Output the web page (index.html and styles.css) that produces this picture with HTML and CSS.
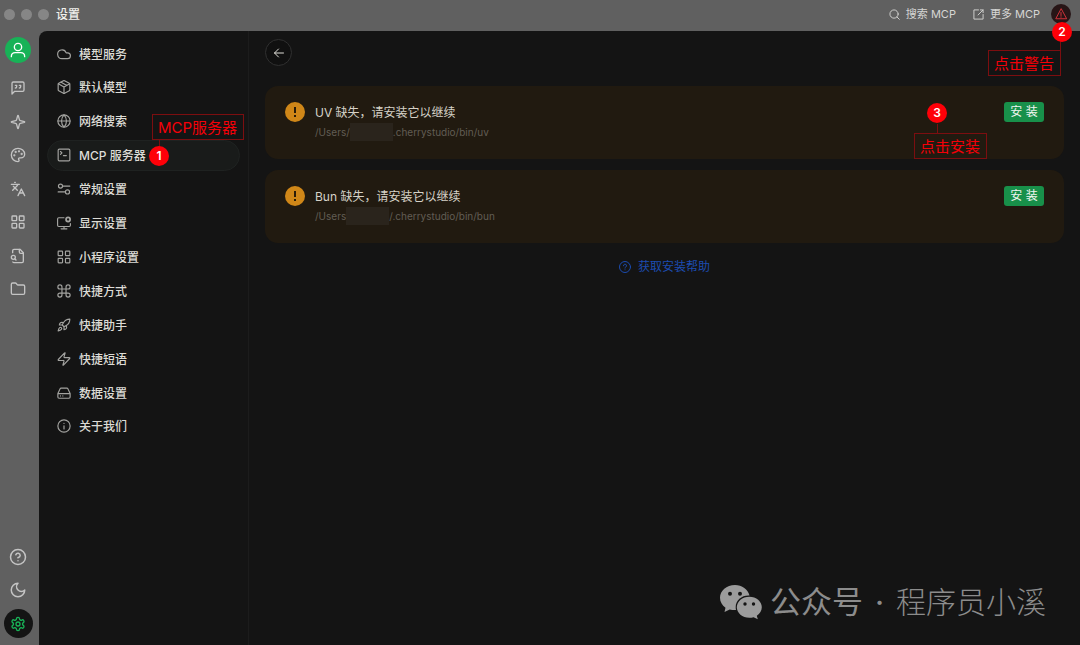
FILE: index.html
```html
<!DOCTYPE html>
<html lang="zh-CN">
<head>
<meta charset="utf-8">
<meta name="viewport" content="width=device-width, initial-scale=1">
<title>设置</title>
<link rel="stylesheet" href="styles.css">
</head>
<body>
<div class="app">
  <header class="titlebar">
    <div class="lights"><span class="light"></span><span class="light"></span><span class="light"></span></div>
    <h1 class="title">设置</h1>
    <div class="actions">
      <button class="action" type="button"><svg class="icon icon-xs" viewBox="0 0 24 24"><circle cx="11" cy="11" r="9"/><path d="m22.500 22.500-5-5"/></svg>搜索 MCP</button>
      <button class="action" type="button"><svg class="icon icon-xs" viewBox="0 0 24 24"><path d="M12 2H2v20h20V12"/><path d="M16 2h6v6"/><path d="M22 2 11 13"/></svg>更多 MCP</button>
      <div class="warning">
        <button class="warning-button" type="button" aria-label="警告"><svg class="icon icon-sm" viewBox="0 0 24 24"><path d="M12 2 1.500 21.500h21z"/><path d="M12 9v6M12 17.500v1"/></svg></button>
        <span class="step step-two">2</span>
        <span class="callout callout-two">点击警告</span>
      </div>
    </div>
  </header>

  <div class="body">
    <aside class="rail">
      <button class="avatar" type="button" aria-label="用户"><svg class="icon icon-lg" viewBox="0 0 24 24"><circle cx="12" cy="7.500" r="5.500"/><path d="M2 22c0-4 3-6 6-6h8c3 0 6 2 6 6"/></svg></button>
      <nav class="rail-main" aria-label="主导航">
        <button class="rail-button" type="button" aria-label="对话"><svg class="icon icon-lg" viewBox="0 0 24 24"><path d="M21 15a2 2 0 0 1-2 2H7l-4 4V5a2 2 0 0 1 2-2h14a2 2 0 0 1 2 2z"/><path d="M8 12a2 2 0 0 0 2-2V8H8M14 12a2 2 0 0 0 2-2V8h-2"/></svg></button>
        <button class="rail-button" type="button" aria-label="助手"><svg class="icon icon-lg" viewBox="0 0 24 24"><path d="M9.937 15.500A2 2 0 0 0 8.500 14.063l-6.135-1.582a.5.5 0 0 1 0-.962L8.500 9.936A2 2 0 0 0 9.937 8.500l1.582-6.135a.5.5 0 0 1 .963 0L14.063 8.500A2 2 0 0 0 15.500 9.937l6.135 1.581a.5.5 0 0 1 0 .964L15.500 14.063a2 2 0 0 0-1.437 1.437l-1.582 6.135a.5.5 0 0 1-.963 0z"/></svg></button>
        <button class="rail-button" type="button" aria-label="绘画"><svg class="icon icon-lg" viewBox="0 0 24 24"><circle cx="13.500" cy="6.500" r=".7"/><circle cx="17.500" cy="10.500" r=".7"/><circle cx="8.500" cy="7.500" r=".7"/><circle cx="6.500" cy="12.500" r=".7"/><path d="M12 2C6.500 2 2 6.500 2 12s4.500 10 10 10c.926 0 1.648-.746 1.648-1.688 0-.437-.18-.835-.437-1.125-.29-.289-.438-.652-.438-1.125a1.640 1.640 0 0 1 1.668-1.668h1.996c3.051 0 5.555-2.503 5.555-5.554C21.965 6.012 17.461 2 12 2z"/></svg></button>
        <button class="rail-button" type="button" aria-label="翻译"><svg class="icon icon-lg" viewBox="0 0 24 24"><path d="m5 8 6 6M4 14l6-6 2-3M2 5h12M7 2h1M22 22l-5-10-5 10M14 18h6"/></svg></button>
        <button class="rail-button" type="button" aria-label="小程序"><svg class="icon icon-lg" viewBox="0 0 24 24"><rect x="3" y="3" width="7" height="7" rx="1"/><rect x="14" y="3" width="7" height="7" rx="1"/><rect x="14" y="14" width="7" height="7" rx="1"/><rect x="3" y="14" width="7" height="7" rx="1"/></svg></button>
        <button class="rail-button" type="button" aria-label="知识库"><svg class="icon icon-lg" viewBox="0 0 24 24"><path d="M14 2v4a2 2 0 0 0 2 2h4"/><path d="M4.268 21a2 2 0 0 0 1.727 1H18a2 2 0 0 0 2-2V7l-5-5H6a2 2 0 0 0-2 2v3"/><path d="m9 18-1.500-1.500"/><circle cx="5" cy="14" r="3"/></svg></button>
        <button class="rail-button" type="button" aria-label="文件"><svg class="icon icon-lg" viewBox="0 0 24 24"><path d="M20 20a2 2 0 0 0 2-2V8a2 2 0 0 0-2-2h-7.900a2 2 0 0 1-1.690-.9L9.600 3.900A2 2 0 0 0 7.930 3H4a2 2 0 0 0-2 2v13a2 2 0 0 0 2 2z"/></svg></button>
      </nav>
      <div class="rail-foot">
        <button class="rail-button rail-round" type="button" aria-label="帮助"><svg class="icon icon-xl" viewBox="0 0 24 24"><circle cx="12" cy="12" r="10"/><path d="M9.090 9a3 3 0 0 1 5.830 1c0 2-3 3-3 3M12 17h.01"/></svg></button>
        <button class="rail-button rail-round" type="button" aria-label="深色主题"><svg class="icon icon-xl" viewBox="0 0 24 24"><path d="M12 3a6 6 0 0 0 9 9 9 9 0 1 1-9-9z"/></svg></button>
        <button class="rail-button rail-round rail-active" type="button" aria-label="设置"><svg class="icon icon-lg" viewBox="0 0 24 24"><path d="M12.220 2h-.44a2 2 0 0 0-2 2v.18a2 2 0 0 1-1 1.730l-.43.25a2 2 0 0 1-2 0l-.15-.08a2 2 0 0 0-2.730.73l-.22.38a2 2 0 0 0 .73 2.730l.15.1a2 2 0 0 1 1 1.720v.51a2 2 0 0 1-1 1.740l-.15.09a2 2 0 0 0-.73 2.730l.22.38a2 2 0 0 0 2.730.73l.15-.08a2 2 0 0 1 2 0l.43.25a2 2 0 0 1 1 1.730V20a2 2 0 0 0 2 2h.44a2 2 0 0 0 2-2v-.18a2 2 0 0 1 1-1.730l.43-.25a2 2 0 0 1 2 0l.15.08a2 2 0 0 0 2.730-.73l.22-.39a2 2 0 0 0-.73-2.730l-.15-.08a2 2 0 0 1-1-1.740v-.5a2 2 0 0 1 1-1.740l.15-.09a2 2 0 0 0 .73-2.730l-.22-.38a2 2 0 0 0-2.730-.73l-.15.08a2 2 0 0 1-2 0l-.43-.25a2 2 0 0 1-1-1.730V4a2 2 0 0 0-2-2z"/><circle cx="12" cy="12" r="3"/></svg></button>
      </div>
    </aside>

    <div class="window">
      <nav class="menu" aria-label="设置">
        <ul class="menu-list">
          <li><a class="menu-item" href="#model"><svg class="icon" viewBox="0 0 24 24"><path d="M18 20H8.500a7.500 7.500 0 1 1 7.200-10H18a5 5 0 1 1 0 10z"/></svg><span class="label">模型服务</span></a></li>
          <li><a class="menu-item" href="#default"><svg class="icon" viewBox="0 0 24 24"><path d="M11 22.730a2 2 0 0 0 2 0l8-4.500A2 2 0 0 0 22 16.500v-9a2 2 0 0 0-1-1.730l-8-4.500a2 2 0 0 0-2 0l-8 4.500A2 2 0 0 0 2 7.500v9a2 2 0 0 0 1 1.730z"/><path d="M12 23V12M2.300 6.500 12 12l9.700-5.500M7 3.700l10 5.600"/></svg><span class="label">默认模型</span></a></li>
          <li><a class="menu-item" href="#search"><svg class="icon" viewBox="0 0 24 24"><circle cx="12" cy="12" r="10.500"/><path d="M12 1.500a15 15 0 0 0 0 21 15 15 0 0 0 0-21M1.500 12h21"/></svg><span class="label">网络搜索</span></a></li>
          <li>
            <a class="menu-item menu-active" href="#mcp" aria-current="page"><svg class="icon" viewBox="0 0 24 24"><rect x="2" y="2" width="20" height="20" rx="2"/><path d="m6 11 2.500-2.500L6 6M11 13h5"/></svg><span class="label">MCP 服务器</span></a>
            <span class="step step-one">1</span>
            <span class="callout callout-one">MCP服务器</span>
          </li>
          <li><a class="menu-item" href="#general"><svg class="icon" viewBox="0 0 24 24"><path d="M22 7H10M14 17H2"/><circle cx="18" cy="17" r="3.500"/><circle cx="6" cy="7" r="3.500"/></svg><span class="label">常规设置</span></a></li>
          <li><a class="menu-item" href="#display"><svg class="icon" viewBox="0 0 24 24"><path d="M12 3H3a2 2 0 0 0-2 2v11a2 2 0 0 0 2 2h18a2 2 0 0 0 2-2v-3M12 18v4M7 22h10"/><circle class="bold" cx="19" cy="6" r="3.500"/></svg><span class="label">显示设置</span></a></li>
          <li><a class="menu-item" href="#apps"><svg class="icon" viewBox="0 0 24 24"><rect x="2" y="2" width="7.500" height="7.500" rx="1"/><rect x="14.500" y="2" width="7.500" height="7.500" rx="1"/><rect x="14.500" y="14.500" width="7.500" height="7.500" rx="1"/><rect x="2" y="14.500" width="7.500" height="7.500" rx="1"/></svg><span class="label">小程序设置</span></a></li>
          <li><a class="menu-item" href="#shortcut"><svg class="icon" viewBox="0 0 24 24"><path d="M15.500 5v14a3.500 3.500 0 1 0 3.500-3.500H5A3.500 3.500 0 1 0 8.500 19V5A3.500 3.500 0 1 0 5 8.500h14A3.500 3.500 0 1 0 15.500 5"/></svg><span class="label">快捷方式</span></a></li>
          <li><a class="menu-item" href="#assistant"><svg class="icon" viewBox="0 0 24 24"><path d="M4.500 16.500c-1.500 1.260-2.500 5.500-2.500 5.500s4.240-1 5.500-2.500c.71-.84.7-2.130-.09-2.910a2.180 2.180 0 0 0-2.910-.09zM12 15l-3-3a22 22 0 0 1 2-3.950A12.880 12.880 0 0 1 22 2c0 2.720-.78 7.500-6 11a22.350 22.350 0 0 1-4 2z"/><path d="M9 12H4s.55-3.030 2-4c1.620-1.080 5 0 5 0M12 15v5s3.030-.55 4-2c1.080-1.620 0-5 0-5"/></svg><span class="label">快捷助手</span></a></li>
          <li><a class="menu-item" href="#phrase"><svg class="icon" viewBox="0 0 24 24"><path d="M3 14.500a1 1 0 0 1-.78-1.630L13 1.500a.5.5 0 0 1 .86.460l-1.920 6.540A1 1 0 0 0 13 9.500h8a1 1 0 0 1 .78 1.630L11 22.500a.5.5 0 0 1-.86-.46l1.920-6.540A1 1 0 0 0 11 14.500z"/></svg><span class="label">快捷短语</span></a></li>
          <li><a class="menu-item" href="#data"><svg class="icon" viewBox="0 0 24 24"><path d="M1.500 13h21M5.500 4.500 1.500 13v6a2 2 0 0 0 2 2h17a2 2 0 0 0 2-2v-6l-4-8.500A2 2 0 0 0 17 3.500H7a2 2 0 0 0-1.500 1zM6 17h.01M10 17h.01"/></svg><span class="label">数据设置</span></a></li>
          <li><a class="menu-item" href="#about"><svg class="icon" viewBox="0 0 24 24"><circle cx="12" cy="12" r="10.500"/><path d="M12 17v-5.500M12 7.500h.01"/></svg><span class="label">关于我们</span></a></li>
        </ul>
      </nav>

      <main class="content">
        <button class="back" type="button" aria-label="返回"><svg class="icon icon-sm" viewBox="0 0 24 24"><path d="m11 20-8-8 8-8M21 12H3"/></svg></button>
        <section class="alert">
          <span class="alert-mark"><svg class="alert-icon" viewBox="0 0 20 20"><path d="M10 5v6"/><path d="M10 13v2"/></svg></span>
          <div class="alert-text">
            <h2 class="alert-title">UV 缺失，请安装它以继续</h2>
            <p class="alert-path">/Users/<span class="redacted"></span>.cherrystudio/bin/uv</p>
          </div>
          <button class="install" type="button">安 装</button>
          <span class="step step-three">3</span>
          <span class="callout callout-three">点击安装</span>
        </section>
        <section class="alert">
          <span class="alert-mark"><svg class="alert-icon" viewBox="0 0 20 20"><path d="M10 5v6"/><path d="M10 13v2"/></svg></span>
          <div class="alert-text">
            <h2 class="alert-title">Bun 缺失，请安装它以继续</h2>
            <p class="alert-path">/Users<span class="redacted"></span>/.cherrystudio/bin/bun</p>
          </div>
          <button class="install" type="button">安 装</button>
        </section>
        <a class="help" href="#help"><svg class="icon icon-sm" viewBox="0 0 24 24"><circle cx="12" cy="12" r="11"/><path d="M9 9.500a3 3 0 1 1 4.500 2.500c-1 .6-1.500 1-1.500 2.200M12 17.500h.01"/></svg>获取安装帮助</a>
      </main>
    </div>
  </div>

  <div class="watermark">
    <svg class="wechat" viewBox="0 0 42 34"><path class="bubble" d="M15 0C6.500 0 0 5.700 0 12.800c0 4 2.100 7.500 5.500 9.900L4.500 27l5.200-2.600c1.700.5 3.500.7 5.300.7h1A12 12 0 0 1 15.700 22C15.700 15 22 10 29.500 10.500 28 4.500 22 0 15 0z"/><path class="bubble" d="M29.300 11.800c-7 0-12.500 4.700-12.500 10.500s5.500 10.500 12.500 10.500c1.500 0 3-.2 4.300-.6l4.200 2-1-3.500c3-2 5-5 5-8.400 0-5.800-5.500-10.500-12.500-10.500z"/><circle class="eye" cx="10" cy="8.800" r="2"/><circle class="eye" cx="20" cy="8.800" r="2"/><circle class="eye" cx="25" cy="19" r="1.700"/><circle class="eye" cx="33.500" cy="19" r="1.700"/></svg>
    <span class="channel">公众号</span><span class="dot">·</span><span>程序员小溪</span>
  </div>
</div>
</body>
</html>
```
FILE: styles.css
```css
* {
  box-sizing: border-box;
}

body {
  margin: 0;
  background: #606060;
  color: #dddcd6;
  font-family: Inter, "Noto Sans CJK SC", sans-serif;
  font-size: 12px;
  line-height: 16px;
}

button {
  padding: 0;
  border: 0;
  background: none;
  color: inherit;
  font: inherit;
}

a {
  color: inherit;
  text-decoration: none;
}

h1,
h2,
p,
ul {
  margin: 0;
  padding: 0;
  font-size: inherit;
  font-weight: inherit;
  list-style: none;
}

.app {
  position: relative;
  display: flex;
  flex-direction: column;
  min-height: 100vh;
}

.icon {
  flex: none;
  width: 14px;
  height: 14px;
  fill: none;
  stroke: currentColor;
  stroke-width: 2;
  stroke-linecap: round;
  stroke-linejoin: round;
}

.icon-xs {
  width: 11px;
  height: 11px;
}

.icon-sm {
  width: 12px;
  height: 12px;
}

.icon-lg {
  width: 16px;
  height: 16px;
}

.icon-xl {
  width: 18px;
  height: 18px;
}

.bold {
  stroke-width: 3;
}

/* Title bar */

.titlebar {
  display: flex;
  align-items: center;
  height: 31px;
  padding: 0 9px 3px 4px;
}

.lights {
  display: flex;
  gap: 6px;
}

.light {
  width: 11px;
  height: 11px;
  border-radius: 50%;
  background: #868686;
}

.title {
  margin-left: 7px;
  padding-top: 2px;
  color: #f0f0ec;
  font-size: 12px;
  font-weight: 500;
}

.actions {
  display: flex;
  align-items: center;
  gap: 17px;
  margin-left: auto;
  color: #d6d6d4;
  font-size: 11px;
}

.action {
  display: flex;
  align-items: center;
  gap: 6px;
}

.warning {
  position: relative;
  margin-left: -6px;
}

.warning-button {
  display: grid;
  place-items: center;
  width: 20px;
  height: 20px;
  border-radius: 50%;
  background: #271516;
  color: #d2323a;
}

/* Icon rail */

.body {
  display: flex;
  flex: 1;
}

.rail {
  display: flex;
  flex: none;
  flex-direction: column;
  align-items: center;
  width: 39px;
  padding: 6px 3px 7px 0;
  color: #c4c4c4;
}

.avatar {
  display: grid;
  place-items: center;
  width: 26px;
  height: 26px;
  border-radius: 50%;
  background: #18b257;
  color: #fff;
}

.rail-main,
.rail-foot {
  display: flex;
  flex-direction: column;
  justify-content: space-between;
}

.rail-main {
  min-height: 221px;
  margin-top: 15px;
}

.rail-foot {
  min-height: 96px;
  margin-top: auto;
}

.rail-button {
  display: grid;
  place-items: center;
  width: 20px;
  height: 20px;
}

.rail-round {
  width: 29px;
  height: 29px;
  border-radius: 50%;
}

.rail-active {
  background: #141414;
  color: #18b257;
}

/* Settings menu */

.window {
  display: flex;
  flex: 1;
  min-width: 0;
  border-top-left-radius: 8px;
  background: #141414;
}

.menu {
  flex: none;
  width: 210px;
  padding: 7px 8px;
  border-right: 1px solid #1c1c1c;
}

.menu-list {
  display: flex;
  flex-direction: column;
  justify-content: space-between;
  min-height: 404px;
}

.menu-list li {
  position: relative;
}

.menu-item {
  display: flex;
  align-items: center;
  gap: 8px;
  height: 31px;
  padding: 0 9px;
  border: 1px solid transparent;
  border-radius: 16px;
  font-weight: 500;
}

.menu-item .icon {
  color: #a3a3a0;
}

.label {
  padding-top: 2px;
}

.menu-active {
  border-color: #1f2221;
  background: #191b1a;
}

/* Content */

.content {
  display: flex;
  flex: 1;
  flex-direction: column;
  min-width: 0;
  padding: 8px 16px;
}

.back {
  display: grid;
  place-items: center;
  width: 27px;
  height: 27px;
  margin-bottom: 20px;
  border: 1px solid #303030;
  border-radius: 50%;
  background: #101010;
}

.alert {
  position: relative;
  display: flex;
  align-items: flex-start;
  gap: 10px;
  min-height: 73px;
  margin-bottom: 11px;
  padding: 16px 20px;
  border-radius: 13px;
  background: #211a10;
}

.alert-mark {
  width: 20px;
  height: 20px;
  border-radius: 50%;
  background: #d08718;
}

.alert-icon {
  display: block;
  fill: none;
  stroke: #2a1c08;
  stroke-width: 2;
}

.alert-text {
  flex: 1;
  padding-top: 3px;
}

.alert-title {
  color: #d6d2c8;
}

.alert-path {
  display: flex;
  align-items: center;
  margin-top: 3px;
  color: #625d54;
  font-size: 10px;
}

.redacted {
  width: 43px;
  height: 18px;
  margin: -1px 0;
  background: #2a241c;
}

.install {
  width: 40px;
  height: 20px;
  border-radius: 3px;
  background: #18904a;
  color: #f0f5f0;
}

.help {
  display: flex;
  align-items: center;
  align-self: center;
  gap: 7px;
  margin-top: 5px;
  color: #1c4cb0;
}

/* Numbered walkthrough marks */

.step {
  position: absolute;
  z-index: 2;
  width: 20px;
  height: 20px;
  border-radius: 50%;
  background: #fe0008;
  color: #fff;
  font-size: 12px;
  font-weight: 600;
  line-height: 20px;
  text-align: center;
}

.callout {
  position: absolute;
  z-index: 1;
  padding: 2px 6px 0 5px;
  border: 1px solid #7c0e10;
  color: #f40008;
  font-size: 15px;
  line-height: 22px;
  white-space: nowrap;
}

.callout::before {
  position: absolute;
  width: 1px;
  height: 10px;
  background: #7c0e10;
  content: "";
}

.step-one {
  top: 6px;
  left: 102px;
}

.callout-one {
  top: -26px;
  left: 105px;
}

.callout-one::before {
  top: 100%;
  left: 6px;
}

.step-two {
  top: 18px;
  left: 1px;
}

.callout-two {
  top: 46px;
  right: 10px;
}

.callout-two::before {
  right: -1px;
  bottom: 100%;
}

.step-three {
  top: 17px;
  right: 117px;
}

.callout-three {
  top: 47px;
  right: 77px;
}

.callout-three::before {
  bottom: 100%;
  left: 22px;
}

/* Watermark */

.watermark {
  position: absolute;
  right: 34px;
  bottom: 23px;
  display: flex;
  align-items: center;
  color: #8c8c8c;
  font-size: 30px;
  font-weight: 300;
  line-height: 40px;
}

.wechat {
  width: 42px;
  height: 36px;
  margin-right: 8px;
}

.bubble {
  fill: #9c9c9c;
}

.eye {
  fill: #141414;
}

.channel {
  font-size: 31px;
  font-weight: 400;
}

.dot {
  width: 33px;
  font-weight: 500;
  text-align: center;
}
```
